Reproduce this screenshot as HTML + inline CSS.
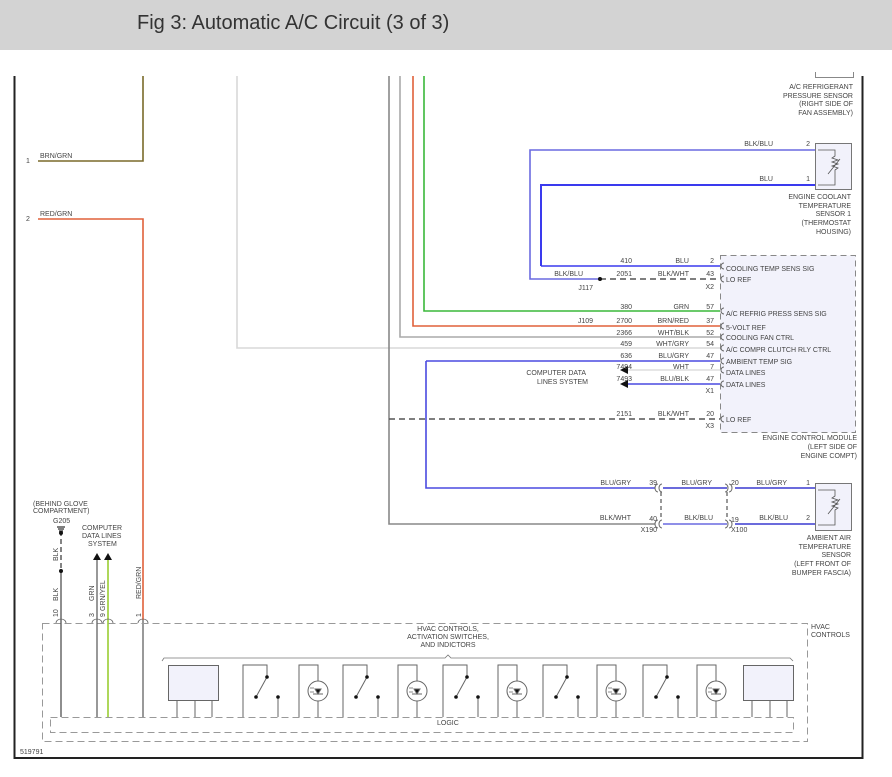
<!DOCTYPE html>
<html><head><meta charset="utf-8"><style>
html,body{margin:0;padding:0;background:#fff;width:892px;height:777px;overflow:hidden}
svg{display:block}
text{font-family:"Liberation Sans",sans-serif;font-size:7px;fill:#444}
.t{font-size:20px;fill:#333}
</style></head><body>
<svg width="892" height="777" viewBox="0 0 892 777" xmlns="http://www.w3.org/2000/svg">
<rect x="0" y="0" width="892" height="50" fill="#d3d3d3"/>
<text class="t" x="137" y="29">Fig 3: Automatic A/C Circuit (3 of 3)</text>
<!-- frame -->
<path d="M14.5 76 V758 H862.5 V76" fill="none" stroke="#222" stroke-width="2"/>
<path d="M815.5 72 V77.5 H853.5 V72" fill="none" stroke="#888"/>
<g fill="none" stroke-width="1.6">
<path d="M143 76 V161 H38" stroke="#7a6a2a"/>
<path d="M38 219 H143 V620" stroke="#e0603a"/>
<path d="M237 76 V348 H720" stroke="#d8d8d8"/>
<path d="M389 76 V524 H655" stroke="#888"/>
<path d="M400 76 V337 H720" stroke="#aaa"/>
<path d="M413 76 V326 H720" stroke="#e0603a"/>
<path d="M424 76 V311 H720" stroke="#3ab83a"/>
<path d="M426 361 H720 M426 361 V488 H655" stroke="#4a4ae0"/>
<path d="M541 266 V185 H815" stroke="#3a3aee" stroke-width="2"/>
<path d="M541 266 H720" stroke="#3a3aee"/>
<path d="M600 279 H530 V150 H815" stroke="#6a6ae0"/>
<path d="M600 279 H720" stroke="#555" stroke-dasharray="6,4"/>
<path d="M389 419 H720" stroke="#555" stroke-dasharray="6,4"/>
<path d="M628 370 H720" stroke="#ddd"/>
<path d="M628 384 H720" stroke="#4a4ae0"/>
<path d="M663 488 H727" stroke="#3a3ad0"/>
<path d="M663 524 H727" stroke="#6a6ae0"/>
<path d="M735 488 H815 M735 524 H815" stroke="#3a3ad0"/>
</g>
<circle cx="600" cy="279" r="2" fill="#111"/>
<path d="M620 370 l8 -4 v8z M620 384 l8 -4 v8z" fill="#111"/>
<!-- ECM -->
<rect x="720.5" y="255.5" width="135" height="177" fill="#f2f2fb" stroke="#888" stroke-dasharray="6,4"/>
<g fill="none" stroke="#666">
<path d="M724 263 a3 3 0 0 0 0 6 M724 276 a3 3 0 0 0 0 6 M724 308 a3 3 0 0 0 0 6 M724 323 a3 3 0 0 0 0 6 M724 334 a3 3 0 0 0 0 6 M724 345 a3 3 0 0 0 0 6 M724 358 a3 3 0 0 0 0 6 M724 367 a3 3 0 0 0 0 6 M724 381 a3 3 0 0 0 0 6 M724 416 a3 3 0 0 0 0 6"/>
<path d="M658 484 a3 4 0 0 0 0 8 M662 484 a3 4 0 0 0 0 8 M658 520 a3 4 0 0 0 0 8 M662 520 a3 4 0 0 0 0 8"/>
<path d="M725 484 a3 4 0 0 1 0 8 M729 484 a3 4 0 0 1 0 8 M725 520 a3 4 0 0 1 0 8 M729 520 a3 4 0 0 1 0 8"/>
<path d="M661 492 V520 M727 492 V520" stroke="#333" stroke-dasharray="4,3"/>
</g>
<text x="726" y="271">COOLING TEMP SENS SIG</text>
<text x="726" y="282">LO REF</text>
<text x="726" y="316">A/C REFRIG PRESS SENS SIG</text>
<text x="726" y="330">5-VOLT REF</text>
<text x="726" y="340">COOLING FAN CTRL</text>
<text x="726" y="352">A/C COMPR CLUTCH RLY CTRL</text>
<text x="726" y="364">AMBIENT TEMP SIG</text>
<text x="726" y="375">DATA LINES</text>
<text x="726" y="387">DATA LINES</text>
<text x="726" y="422">LO REF</text>
<g text-anchor="end">
<text x="857" y="440">ENGINE CONTROL MODULE</text>
<text x="857" y="449">(LEFT SIDE OF</text>
<text x="857" y="458">ENGINE COMPT)</text>
<text x="632" y="263">410</text><text x="689" y="263">BLU</text><text x="714" y="263">2</text>
<text x="583" y="276">BLK/BLU</text><text x="632" y="276">2051</text><text x="689" y="276">BLK/WHT</text><text x="714" y="276">43</text>
<text x="714" y="289">X2</text><text x="593" y="290">J117</text>
<text x="632" y="309">380</text><text x="689" y="309">GRN</text><text x="714" y="309">57</text>
<text x="593" y="323">J109</text><text x="632" y="323">2700</text><text x="689" y="323">BRN/RED</text><text x="714" y="323">37</text>
<text x="632" y="335">2366</text><text x="689" y="335">WHT/BLK</text><text x="714" y="335">52</text>
<text x="632" y="346">459</text><text x="689" y="346">WHT/GRY</text><text x="714" y="346">54</text>
<text x="632" y="358">636</text><text x="689" y="358">BLU/GRY</text><text x="714" y="358">47</text>
<text x="632" y="369">7494</text><text x="689" y="369">WHT</text><text x="714" y="369">7</text>
<text x="632" y="381">7493</text><text x="689" y="381">BLU/BLK</text><text x="714" y="381">47</text>
<text x="714" y="393">X1</text>
<text x="586" y="375">COMPUTER DATA</text><text x="588" y="384">LINES SYSTEM</text>
<text x="632" y="416">2151</text><text x="689" y="416">BLK/WHT</text><text x="714" y="416">20</text>
<text x="714" y="428">X3</text>
<text x="773" y="146">BLK/BLU</text><text x="810" y="146">2</text>
<text x="773" y="181">BLU</text><text x="810" y="181">1</text>
<text x="853" y="89">A/C REFRIGERANT</text><text x="853" y="98">PRESSURE SENSOR</text><text x="853" y="106">(RIGHT SIDE OF</text><text x="853" y="115">FAN ASSEMBLY)</text>
<text x="851" y="199">ENGINE COOLANT</text><text x="851" y="208">TEMPERATURE</text><text x="851" y="216">SENSOR 1</text><text x="851" y="225">(THERMOSTAT</text><text x="851" y="234">HOUSING)</text>
<text x="851" y="540">AMBIENT AIR</text><text x="851" y="549">TEMPERATURE</text><text x="851" y="557">SENSOR</text><text x="851" y="566">(LEFT FRONT OF</text><text x="851" y="575">BUMPER FASCIA)</text>
<text x="631" y="485">BLU/GRY</text><text x="657" y="485">39</text><text x="712" y="485">BLU/GRY</text><text x="787" y="485">BLU/GRY</text><text x="810" y="485">1</text>
<text x="631" y="520">BLK/WHT</text><text x="657" y="521">40</text><text x="713" y="520">BLK/BLU</text><text x="788" y="520">BLK/BLU</text><text x="810" y="520">2</text>
<text x="657" y="532">X190</text>
</g>
<text x="731" y="485">20</text><text x="731" y="522">19</text><text x="731" y="532">X100</text>
<rect x="815.5" y="143.5" width="36" height="46" fill="#f2f2fb" stroke="#777"/>
<rect x="815.5" y="483.5" width="36" height="47" fill="#f2f2fb" stroke="#777"/>
<g fill="none" stroke="#555" stroke-width="0.8">
<path d="M818 150 H835 V156 l-3 2 l6 2 l-6 2 l6 2 l-6 2 l6 2 l-3 2 V185 H818 M828 174 l12 -15"/>
<path d="M818 490 H835 V496 l-3 2 l6 2 l-6 2 l6 2 l-6 2 l6 2 l-3 2 V525 H818 M828 514 l12 -15"/>
</g>
<text x="26" y="163" fill="#e07040">1</text><text x="40" y="158">BRN/GRN</text>
<text x="26" y="221">2</text><text x="40" y="216">RED/GRN</text>
<text x="33" y="506">(BEHIND GLOVE</text><text x="33" y="513">COMPARTMENT)</text>
<text x="53" y="523">G205</text>
<text x="82" y="530">COMPUTER</text><text x="82" y="538">DATA LINES</text><text x="88" y="546">SYSTEM</text>
<g transform="rotate(-90)" font-size="7">
<text x="-561" y="58">BLK</text><text x="-601" y="58">BLK</text><text x="-617" y="58">10</text>
<text x="-601" y="94">GRN</text><text x="-617" y="94">3</text>
<text x="-611" y="105">GRN/YEL</text><text x="-617" y="105">9</text>
<text x="-599" y="141">RED/GRN</text><text x="-617" y="141">1</text>
</g>
<g fill="none" stroke-width="1.2">
<path d="M61 531 V571" stroke="#333" stroke-dasharray="5,3"/>
<path d="M61 571 V717" stroke="#444"/>
<path d="M97 560 V717" stroke="#555"/>
<path d="M108 560 V717" stroke="#9acd32" stroke-width="1.6"/>
<path d="M143 620 V717" stroke="#555"/>
<path d="M57 527 h8 M58 529 h6 M59 531 h4" stroke="#333"/>
</g>
<circle cx="61" cy="533" r="2" fill="#111"/><circle cx="61" cy="571" r="2" fill="#111"/>
<path d="M93 560 l4 -7 l4 7z M104 560 l4 -7 l4 7z" fill="#111"/>
<g fill="none" stroke="#666" stroke-width="0.8">
<path d="M56 623 a5 4 0 0 1 10 0 M92 623 a5 4 0 0 1 10 0 M103 623 a5 4 0 0 1 10 0 M138 623 a5 4 0 0 1 10 0"/>
</g>
<rect x="42.5" y="623.5" width="765" height="118" fill="none" stroke="#999" stroke-dasharray="7,4"/>
<rect x="50.5" y="717.5" width="743" height="15" fill="none" stroke="#999" stroke-dasharray="7,4"/>
<text x="437" y="725">LOGIC</text>
<text x="811" y="629">HVAC</text><text x="811" y="637">CONTROLS</text>
<g text-anchor="middle"><text x="448" y="631">HVAC CONTROLS,</text><text x="448" y="639">ACTIVATION SWITCHES,</text><text x="448" y="647">AND INDICTORS</text></g>
<path d="M162 661 l2 -3 H445 l3 -3 l3 3 H790 l3 3" fill="none" stroke="#777" stroke-width="0.8"/>
<g stroke="#666" stroke-width="1" fill="none">
<rect x="168.5" y="665.5" width="50" height="35" fill="#f2f2fb"/>
<path d="M177 700 V717 M195 700 V717 M212 700 V717"/>
<rect x="743.5" y="665.5" width="50" height="35" fill="#f2f2fb"/>
<path d="M752 700 V717 M770 700 V717 M787 700 V717"/>
</g>
<g id="sw" stroke="#666" fill="none" stroke-width="1">
<path d="M243 717 V665 H267 V677 M267 677 L256 697 M278 697 V717"/>
<circle cx="267" cy="677" r="1.8" fill="#111" stroke="none"/><circle cx="256" cy="697" r="1.8" fill="#111" stroke="none"/><circle cx="278" cy="697" r="1.8" fill="#111" stroke="none"/>
</g>
<use href="#sw" x="100"/><use href="#sw" x="200"/><use href="#sw" x="300"/><use href="#sw" x="400"/>
<g id="led" stroke="#666" fill="none" stroke-width="1">
<path d="M299 717 V665 H318 V717"/>
<circle cx="318" cy="691" r="10" fill="#fff"/>
<path d="M313 694 h10 M318 694 l-3 -5 h6z" fill="#111"/>
<path d="M310 688 h4 M310 692 h4" stroke-width="0.8"/>
</g>
<use href="#led" x="99"/><use href="#led" x="199"/><use href="#led" x="298"/><use href="#led" x="398"/>
<text x="20" y="754">519791</text>
</svg>
</body></html>
